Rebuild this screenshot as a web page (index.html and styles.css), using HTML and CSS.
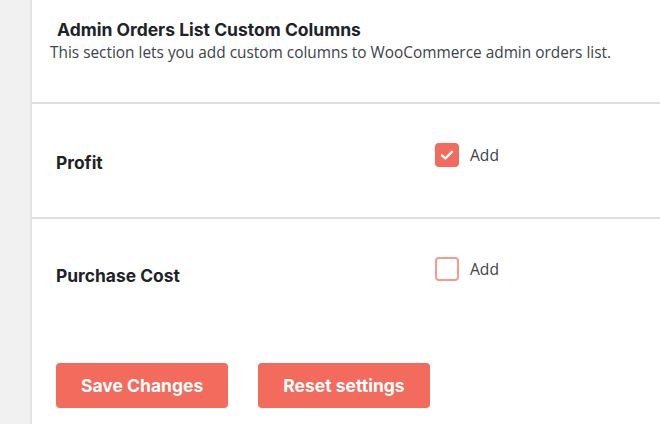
FILE: index.html
```html
<!DOCTYPE html>
<html>
<head>
<meta charset="utf-8">
<link rel="stylesheet" href="styles.css">
</head>
<body>
<div class="layout">
  <aside class="sidebar"></aside>
  <main class="content">
    <header class="section-head">
      <h2 class="section-title">Admin Orders List Custom Columns</h2>
      <p class="section-desc">This section lets you add custom columns to WooCommerce admin orders list.</p>
    </header>
    <div class="row row-first">
      <div class="row-label">Profit</div>
      <label class="row-field">
        <span class="check checked">
          <svg viewBox="0 0 24 24" width="24" height="24"><path d="M7 12.3l3.3 3.2L17 8.8" fill="none" stroke="#fff" stroke-width="2.4" stroke-linecap="round" stroke-linejoin="round"/></svg>
        </span>
        <span class="check-text">Add</span>
      </label>
    </div>
    <div class="row row-second">
      <div class="row-label">Purchase Cost</div>
      <label class="row-field">
        <span class="check"></span>
        <span class="check-text">Add</span>
      </label>
    </div>
    <div class="actions">
      <button class="btn">Save Changes</button>
      <button class="btn">Reset settings</button>
    </div>
  </main>
</div>
</body>
</html>
```
FILE: styles.css
```css
html, body {
  margin: 0;
  padding: 0;
  background: #fff;
}
.layout {
  display: flex;
  min-height: 424px;
}
.sidebar {
  width: 30px;
  flex: none;
  background: #f1f1f2;
  border-right: 2px solid #e4e4e6;
}
.content {
  flex: 1;
  font-family: Inter, "Liberation Sans", sans-serif;
}
.section-head {
  padding: 20px 0 0 0;
  height: 82px;
  border-bottom: 2px solid #e0e0e2;
}
.section-title {
  margin: 0 0 0 25px;
  font-size: 17.5px;
  font-weight: 700;
  color: #1d2327;
  line-height: 20px;
}
.section-desc {
  margin: 3px 0 0 18px;
  font-family: "Open Sans", "Liberation Sans", sans-serif;
  font-size: 15.4px;
  color: #3c434a;
  line-height: 20px;
}
.row {
  display: flex;
  height: 113px;
  border-bottom: 2px solid #e0e0e2;
}
.row-second {
  border-bottom: none;
  height: 144px;
}
.row-label {
  width: 379px;
  padding: 49px 0 0 24px;
  font-size: 17.4px;
  font-weight: 700;
  color: #1d2327;
  line-height: 20px;
}
.row-second .row-label {
  padding-top: 47px;
}
.row-field {
  display: flex;
  align-items: center;
  gap: 11px;
  padding-top: 38px;
  height: 26px;
}
.row-second .row-field {
  padding-top: 37px;
}
.check {
  width: 24px;
  height: 24px;
  box-sizing: border-box;
  border-radius: 4px;
  border: 2px solid #f79a8e;
  background: #fff;
  display: flex;
}
.check.checked {
  background: #f26b5d;
  border-color: #f26b5d;
}
.check svg {
  margin: -2px;
}
.check-text {
  font-family: "Open Sans", "Liberation Sans", sans-serif;
  font-size: 15.6px;
  color: #3c434a;
}
.actions {
  display: flex;
  gap: 30px;
  padding-left: 24px;
}
.btn {
  height: 45px;
  padding: 0 25px;
  border: none;
  border-radius: 4px;
  background: #f26b5d;
  color: #fff;
  font-family: Inter, "Liberation Sans", sans-serif;
  font-size: 17.5px;
  font-weight: 700;
}
```
